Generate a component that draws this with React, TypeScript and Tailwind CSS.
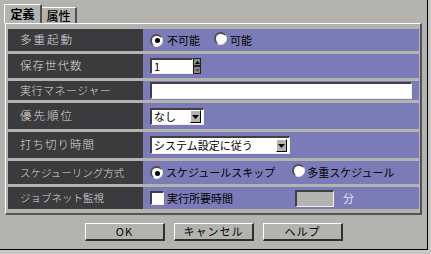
import React from "react";

const F = { fontFamily: '"Noto Sans CJK JP", "Noto Sans", sans-serif' };

function Radio({ on }: { on?: boolean }) {
  return (
    <span className="relative inline-flex items-center justify-center w-[13px] h-[13px] rounded-full bg-white border-t-2 border-l-2 border-[#505050] border-r border-b border-r-[#e8e8e8] border-b-[#e8e8e8]">
      {on && <span className="w-[5px] h-[5px] rounded-full bg-black" />}
    </span>
  );
}

function Row({ label, children, h, lc }: { label: string; children: React.ReactNode; h: number; lc: string }) {
  return (
    <div className="flex w-[411px]" style={{ height: h }}>
      <div className={"w-[135px] bg-[#3b3a3d] text-[#dcdcdc] flex items-center pl-[12px] whitespace-nowrap font-light " + lc}>
        {label}
      </div>
      <div className="flex-1 bg-[#7b7bb7] flex items-center pl-[7px] text-[11px] text-black whitespace-nowrap">
        {children}
      </div>
    </div>
  );
}

function Sunken({ className, children }: { className: string; children?: React.ReactNode }) {
  return (
    <div className={"border-t-2 border-l-2 border-t-[#404040] border-l-[#404040] border-r border-b border-r-[#f0f0f0] border-b-[#f0f0f0] " + className}>
      {children}
    </div>
  );
}

function DropBtn() {
  return (
    <div className="w-[11px] h-[13px] bg-[#b3b4b0] border-t border-l border-t-white border-l-white border-r border-b border-r-black border-b-black flex items-center justify-center">
      <svg width="7" height="4" viewBox="0 0 7 4"><path d="M0 0h7L3.5 4z" fill="#000" /></svg>
    </div>
  );
}

function Btn({ children }: { children: React.ReactNode }) {
  return (
    <div className="w-[80px] h-[18px] bg-[#b3b4b0] border-t border-l border-t-white border-l-white border-r-2 border-b-2 border-r-[#303030] border-b-[#303030] flex items-center justify-center text-[11px] text-black tracking-[1px]">
      {children}
    </div>
  );
}

export default function App() {
  return (
    <div className="w-[431px] h-[254px] bg-[#c6c6c2]" style={F}>
      <div className="w-[428px] h-[250px] bg-[#b3b4b0] border-r border-b border-black flex flex-col">
        <div className="flex items-end pl-[4px] pt-[4px] h-[23px]">
          <div className="w-[38px] h-[19px] border-t border-l border-white border-r-2 border-r-[#505050] flex items-center justify-center text-[12px] font-bold text-black">
            定義
          </div>
          <div className="w-[35px] h-[16px] border-t border-white border-r-2 border-r-[#505050] flex items-center justify-center text-[12px] font-medium text-black">
            属性
          </div>
        </div>
        <div className="ml-[5px] w-[417px] h-[192px] border-t border-l border-white border-r-2 border-b-2 border-r-[#555] border-b-[#555] pl-[2px] pt-[5px] flex flex-col gap-[3px]">
          <Row label="多重起動" h={22} lc="text-[11.5px] tracking-[2px]">
            <Radio on />
            <span className="ml-[4px]">不可能</span>
            <span className="ml-[14px]"><Radio /></span>
            <span className="ml-[3px]">可能</span>
          </Row>
          <Row label="保存世代数" h={24} lc="text-[11.5px] tracking-[1px]">
            <Sunken className="w-[43px] h-[16px] bg-white flex items-center pl-[2px] text-[11px]">1</Sunken>
            <div className="flex flex-col h-[16px] w-[8px]">
              <div className="h-[8px] bg-[#8a8a8a] border border-[#222] flex items-center justify-center">
                <svg width="5" height="3" viewBox="0 0 5 3"><path d="M0 3h5L2.5 0z" fill="#000" /></svg>
              </div>
              <div className="h-[8px] bg-[#8a8a8a] border border-[#222] flex items-center justify-center">
                <svg width="5" height="3" viewBox="0 0 5 3"><path d="M0 0h5L2.5 3z" fill="#555" /></svg>
              </div>
            </div>
          </Row>
          <Row label="実行マネージャー" h={19} lc="text-[11px] tracking-[0.5px]">
            <Sunken className="w-[262px] h-[17px] bg-white" />
          </Row>
          <Row label="優先順位" h={26} lc="text-[11.5px] tracking-[2px]">
            <Sunken className="w-[54px] h-[17px] bg-white flex items-center justify-between pl-[2px] pr-[2px]">
              <span className="text-[11px]">なし</span>
              <DropBtn />
            </Sunken>
          </Row>
          <Row label="打ち切り時間" h={26} lc="text-[11.5px] tracking-[1px]">
            <Sunken className="w-[140px] h-[18px] bg-white flex items-center justify-between pl-[2px] pr-[2px]">
              <span className="text-[11px]">システム設定に従う</span>
              <DropBtn />
            </Sunken>
          </Row>
          <Row label="スケジューリング方式" h={23} lc="text-[10.5px] tracking-[0px]">
            <Radio on />
            <span className="ml-[3px]">スケジュールスキップ</span>
            <span className="ml-[17px]"><Radio /></span>
            <span className="ml-[2px]">多重スケジュール</span>
          </Row>
          <Row label="ジョブネット監視" h={22} lc="text-[10.5px] tracking-[0px]">
            <Sunken className="w-[14px] h-[14px] bg-white" />
            <span className="ml-[3px]">実行所要時間</span>
            <Sunken className="ml-[62px] w-[39px] h-[17px] bg-[#b3b4b0]" />
            <span className="ml-[9px] text-[#e8e8f0]">分</span>
          </Row>
        </div>
        <div className="flex gap-[9px] pl-[85px] pt-[8px]">
          <Btn>OK</Btn>
          <Btn>キャンセル</Btn>
          <Btn>ヘルプ</Btn>
        </div>
      </div>
    </div>
  );
}
